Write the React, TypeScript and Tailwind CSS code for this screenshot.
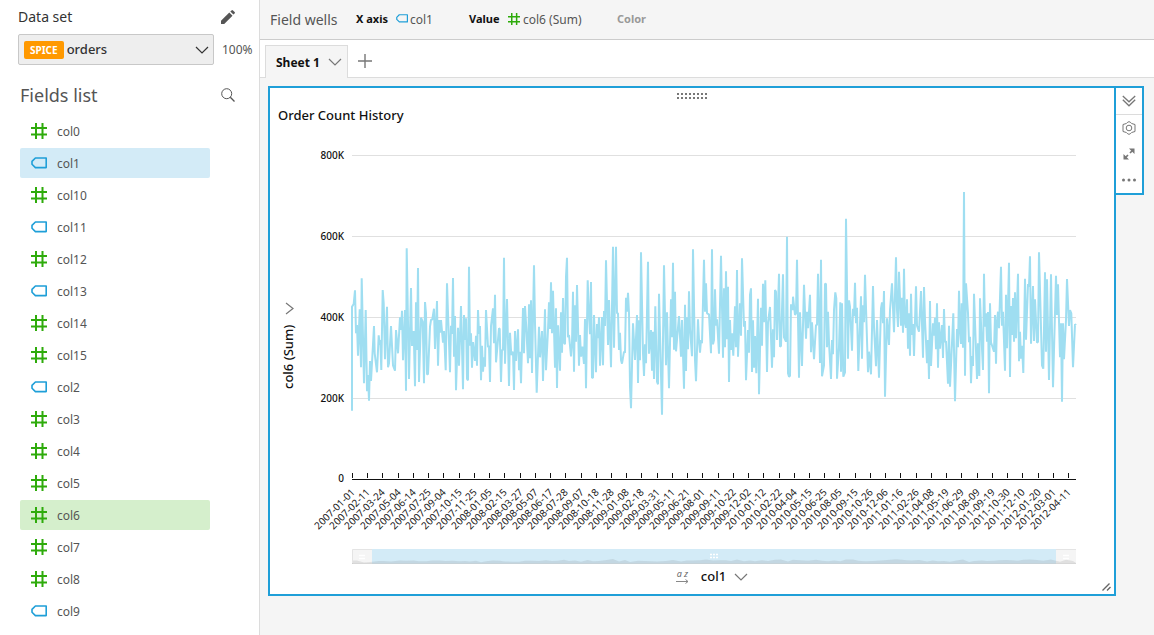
import React from "react";

type Kind = "number" | "text";
type Point = [number, number];

const FIELDS: { name: string; kind: Kind }[] = [
  { name: "col0", kind: "number" },
  { name: "col1", kind: "text" },
  { name: "col10", kind: "number" },
  { name: "col11", kind: "text" },
  { name: "col12", kind: "number" },
  { name: "col13", kind: "text" },
  { name: "col14", kind: "number" },
  { name: "col15", kind: "number" },
  { name: "col2", kind: "text" },
  { name: "col3", kind: "number" },
  { name: "col4", kind: "number" },
  { name: "col5", kind: "number" },
  { name: "col6", kind: "number" },
  { name: "col7", kind: "number" },
  { name: "col8", kind: "number" },
  { name: "col9", kind: "text" },
];

// The series is kept in four consecutive blocks, each with its own x origin.
// Points are "x,y" in thirds of a chart unit.
const BLOCKS: { origin: number; points: string }[] = [
  {
    origin: 345,
    points:
      "21,692 21,380 26,372 30,331 33,460 36,435 39,527 44,388 48,562 50,295 57,610 62,390 66,634 69,585 72,662 75,543 78,603 87,438 89,520 96,577 101,466 104,495 106,480 109,570 113,330 116,370 120,538 126,380 129,562 132,550 138,438 144,556 150,572 153,450 159,520 165,412 168,450 171,392 174,541 180,390 183,632 185,205 192,597 198,324 201,498 206,453 210,619 213,367 216,510 219,264 222,606 228,413 233,425 237,610 240,366 243,400 246,583 249,583 255,440 258,420 262,418 267,386 270,507 276,363 279,557 283,420 285,458 288,420 294,488 297,453 302,571 306,310 315,577 318,437 321,462 324,294 327,530 330,408 333,631 339,443 342,557 345,470 348,378 354,628 357,405 360,480 363,415 366,597 369,601 372,260 375,497 378,460 381,563 384,486 390,543 393,467 396,557 399,390 402,462 405,438 408,601 411,497 414,575 417,532 420,560 423,390 429,502 432,497 435,606 438,438 444,385 447,490 450,344 453,547 462,445 464,447 468,606 471,510 474,510 477,233 480,551 486,357 492,618 495,458 499,525 504,515 507,630 510,453 513,543 519,448 522,571 525,515 528,610 534,384 537,520 540,378 544,443 549,550 552,373 555,535 558,361 561,579",
  },
  {
    origin: 530,
    points:
      "12,256 15,430 20,638 27,440 30,532 36,453 39,603 45,388 48,571 54,450 57,367 60,447 63,307 66,460 69,332 75,563 78,385 81,624 84,436 90,572 93,397 96,518 99,354 102,488 105,493 108,290 111,233 114,472 117,465 123,529 126,490 129,335 132,575 135,376 138,485 141,315 147,557 150,465 153,530 157,500 162,552 165,417 168,625 173,301 176,390 180,463 183,306 186,593 189,593 192,405 198,577 201,432 204,475 207,412 210,557 216,411 219,556 222,393 225,438 228,241 234,495 237,360 243,562 249,200 252,503 258,200 261,400 264,400 267,510 270,458 273,540 276,551 282,515 285,518 288,353 291,395 294,338 297,400 300,620 303,685 309,430 315,540 321,405 324,609 327,421 330,541 333,217 339,520 342,588 345,493 348,550 354,245 357,521 363,450 366,572 369,455 372,597 376,379 381,605 384,613 387,341 396,704 402,256 408,556 411,397 417,625 423,358 426,472 429,248 432,509 435,335 438,514 447,408 453,530 456,420 462,626 465,374 468,573 471,412 474,508 477,334 480,446 486,529 489,208 495,540 498,604 504,418 507,480 510,518 513,480 516,490 522,239 525,395 528,310 531,400 537,403 543,520 546,208 549,493 552,480 555,328 558,437 561,418 567,521",
  },
  {
    origin: 715,
    points:
      "18,227 24,533 27,325 30,502 33,274 36,478 39,320 42,606 45,420 48,510 51,460 55,527 60,379 63,502 66,270 69,530 75,370 78,467 81,235 87,440 90,423 93,601 99,450 102,518 105,345 108,325 111,576 114,421 117,563 120,468 124,580 129,356 132,643 138,383 141,497 144,311 147,427 151,301 156,576 159,428 165,381 171,563 174,448 177,532 180,330 183,335 186,480 192,281 195,500 198,498 204,283 207,472 213,485 216,170 219,580 222,590 225,587 228,373 233,390 234,350 240,405 243,400 246,239 252,593 255,397 261,558 267,314 273,476 276,395 279,445 285,344 288,517 291,427 297,538 303,435 306,435 309,281 315,549 318,239 321,589 327,556 330,312 333,311 336,502 339,395 342,488 348,597 351,480 354,523 357,390 361,337 364,355 366,596 372,500 376,367 378,575 381,370 385,590 390,577 393,116 399,536 402,361 405,380 411,512 414,386 417,408 420,308 423,430 426,383 430,573 438,349 441,536 444,376 447,427 450,284 456,480 459,577 462,515 468,583 474,318 477,440 483,559 486,420 492,593 498,385 501,367 504,430 507,333 510,650 516,415 522,495 525,390 531,310 537,457 543,232 546,390 549,441 552,275 558,437 561,353 564,458",
  },
  {
    origin: 900,
    points:
      "12,266 15,430 18,443 21,358 24,506 27,400 30,527 33,341 36,465 39,432 42,528 48,319 51,437 57,455 63,333 69,533 72,321 75,420 81,550 84,480 87,597 90,363 93,558 99,430 102,467 105,413 108,508 111,370 114,563 117,427 120,506 126,435 129,534 132,387 135,487 138,483 144,611 147,437 150,620 156,490 160,400 165,664 171,447 174,502 177,332 180,450 183,492 185,370 189,503 192,36 195,587 198,310 204,400 207,487 210,470 213,610 216,528 219,558 222,341 231,597 234,490 238,588 240,355 246,506 249,570 252,281 255,440 258,400 261,485 264,396 267,640 270,370 273,487 282,515 285,405 288,551 291,425 294,395 297,445 303,260 306,437 309,395 315,572 318,344 321,505 327,248 330,591 333,378 336,465 339,354 342,485 345,337 348,475 354,281 357,544 360,455 363,536 366,497 370,579 375,296 378,479 384,312 387,320 390,229 393,491 399,318 402,483 405,358 411,488 414,485 417,217 420,330 426,556 430,566 435,277 438,515 441,298 447,600 453,283 459,622 468,287 471,405 474,313 480,532 483,430 486,665 489,430 492,538 498,420 501,297 507,438 510,390 514,400 519,562 525,433 528,436",
  },
];

const SERIES: Point[] = BLOCKS.flatMap(({ origin, points }) =>
  points.split(" ").map((pair): Point => {
    const [x, y] = pair.split(",").map(Number);
    return [origin + x / 3, 180 + y / 3];
  }),
);

const LINE = SERIES.map(([x, y]) => `${x.toFixed(1)},${y.toFixed(1)}`).join(" ");

// Overview strip: the same series smoothed over a short window.
const OVERVIEW =
  "352,563 " +
  SERIES.filter((_, i) => i % 5 === 0)
    .map(([x], i) => {
      const part = SERIES.slice(i * 5, i * 5 + 5);
      const mean = part.reduce((sum, p) => sum + p[1], 0) / part.length;
      return `${x.toFixed(1)},${(561 + (mean - 338) / 22).toFixed(1)}`;
    })
    .join(" ") +
  " 1076,563";

const TICKS = Array.from({ length: 48 }, (_, i) => ({
  x: Math.round(352 + i * 15.234) + 0.5,
  label: new Date(Date.UTC(2007, 0, 1 + i * 41)).toISOString().slice(0, 10),
}));

const Y_AXIS = [
  { label: "800K", y: 155.5 },
  { label: "600K", y: 236.5 },
  { label: "400K", y: 317.5 },
  { label: "200K", y: 398.5 },
];

function HashIcon({ className }: { className: string }) {
  return (
    <svg viewBox="0 0 16 16" className={className} fill="none" stroke="#2eab0b" strokeWidth="2" aria-hidden="true">
      <path d="M5 0v16M11.500 0v16M0 5h16M0 11.500h16" />
    </svg>
  );
}

function TagIcon({ className }: { className: string }) {
  return (
    <svg viewBox="0 0 16 12" className={className} fill="none" stroke="#1f9fd8" strokeWidth="1.6" aria-hidden="true">
      <path d="M4.400 1H15.200V10.600H4.400L1 7.200V4.400Z" strokeLinejoin="round" />
    </svg>
  );
}

function Chevron({ className }: { className: string }) {
  return (
    <svg viewBox="0 0 14 8" className={className} fill="none" stroke="currentColor" strokeWidth="1.2" aria-hidden="true">
      <path d="M1 1l6 6 6-6" />
    </svg>
  );
}

function Sidebar() {
  return (
    <aside className="w-[260px] shrink-0 border-r border-[#dcdcdc] bg-white">
      <div className="flex h-[34px] items-center justify-between pr-6 pl-[18px]">
        <h2 className="text-sm text-[#333]">Data set</h2>
        <button aria-label="Edit data set" className="text-[#555]">
          <svg viewBox="0 0 14 14" className="size-[14px]" fill="currentColor" aria-hidden="true">
            <path d="M0 14v-3.2L8.3 2.5l3.2 3.2L3.2 14zM9.3 1.6L10.5.4q.7-.7 1.5 0L13.6 2q.7.7 0 1.4l-1.2 1.2z" />
          </svg>
        </button>
      </div>
      <div className="flex items-center gap-2 pl-[18px]">
        <label className="flex h-[31px] w-[196px] items-center rounded-xs border border-[#c8c8c8] bg-[#eee] pr-1 pl-[5px] text-[#333]">
          <span className="rounded-xs bg-[#ff9900] px-[6px] text-[10px] leading-[18px] font-bold text-white">SPICE</span>
          <select aria-label="Data set" defaultValue="orders" className="min-w-0 flex-1 appearance-none bg-transparent pl-[3px] text-[13px] font-medium outline-none">
            <option>orders</option>
          </select>
          <Chevron className="h-2 w-[14px]" />
        </label>
        <span className="text-xs text-[#555]">100%</span>
      </div>
      <div className="flex h-[51px] items-center justify-between pt-2 pr-6 pl-5">
        <h2 className="text-lg text-[#555]">Fields list</h2>
        <button aria-label="Search fields" className="text-[#555]">
          <svg viewBox="0 0 14 14" className="size-[14px]" fill="none" stroke="currentColor" aria-hidden="true">
            <circle cx="5.7" cy="5.7" r="5" />
            <path d="M9.3 9.3l4.2 4.2" strokeWidth="1.3" />
          </svg>
        </button>
      </div>
      <ul className="flex flex-col gap-[2px] pr-[49px] pl-5">
        {FIELDS.map(({ name, kind }) => (
          <li key={name}>
            <button
              className={`flex h-[30px] w-full items-center gap-[10px] rounded-xs pl-[11px] text-xs text-[#555] ${
                name === "col1" ? "bg-[#d3ebf7]" : name === "col6" ? "bg-[#d5efcc]" : ""
              }`}
            >
              {kind === "number" ? <HashIcon className="size-4" /> : <TagIcon className="h-3 w-4" />}
              <span className="pt-[2px]">{name}</span>
            </button>
          </li>
        ))}
      </ul>
    </aside>
  );
}

function FieldWells() {
  return (
    <div className="flex h-10 items-center border-b border-[#ccc] pl-[10px] text-xs text-[#555]">
      <span className="w-[86px] text-sm whitespace-nowrap">Field wells</span>
      <div className="flex w-[113px] items-center">
        <strong className="w-10 text-[11px] whitespace-nowrap text-[#111]">X axis</strong>
        <TagIcon className="mb-[2px] h-[9px] w-3" />
        <span className="pl-[2px]">col1</span>
      </div>
      <div className="flex w-[148px] items-center">
        <strong className="w-[39px] text-[11px] text-[#111]">Value</strong>
        <HashIcon className="mb-[2px] size-3" />
        <span className="pl-[3px]">col6 (Sum)</span>
      </div>
      <strong className="text-[11px] text-[#999]">Color</strong>
    </div>
  );
}

function SheetTabs() {
  return (
    <div className="flex h-[38px] items-end border-b border-[#dcdcdc] bg-white pl-[5px]">
      <button className="-mb-px flex h-[33px] w-[83px] items-center justify-between border border-b-0 border-[#dcdcdc] bg-[#f5f5f5] pr-[5px] pl-[10px] text-xs font-bold text-[#111]">
        <span className="pt-[2px]">Sheet 1</span>
        <Chevron className="h-2 w-[14px] text-[#777]" />
      </button>
      <button aria-label="Add sheet" className="mb-[9px] ml-[10px] text-[#777]">
        <svg viewBox="0 0 14 14" className="size-[14px]" stroke="currentColor" strokeWidth="1.4" aria-hidden="true">
          <path d="M7 0v14M0 7h14" />
        </svg>
      </button>
    </div>
  );
}

function Chart() {
  return (
    <svg viewBox="270 128 844 438" className="block w-full" role="img" aria-label="Order Count History">
      <g stroke="#e0e0e0">
        {Y_AXIS.map(({ label, y }) => (
          <path key={label} d={`M352 ${y}H1076`} />
        ))}
      </g>
      <g fontSize="10" fontWeight="500" fill="#111" textAnchor="end">
        {Y_AXIS.map(({ label, y }) => (
          <text key={label} x="344" y={y + 3}>
            {label}
          </text>
        ))}
        <text x="344" y="482">
          0
        </text>
      </g>
      <path d="M286 303l7 5.500-7 5.500" fill="none" stroke="#777" strokeWidth="1.2" />
      <text transform="translate(293 389) rotate(-90)" fontSize="13" fontWeight="500" fill="#111">
        col6 (Sum)
      </text>
      <polyline points={LINE} fill="none" stroke="#9fdef1" strokeWidth="2" strokeLinejoin="bevel" />
      <path d="M352 479.500H1076" stroke="#111" />
      {TICKS.map(({ x, label }) => (
        <g key={label}>
          <path d={`M${x} 473v5`} stroke="#111" />
          <text transform={`translate(${x + 3} 493) rotate(-45)`} fontSize="10" fill="#222" textAnchor="end">
            {label}
          </text>
        </g>
      ))}
      <rect x="352" y="549" width="724" height="15" fill="#f5f5f5" />
      <rect x="372" y="549" width="684" height="15" fill="#d3ebf7" />
      <polygon points={OVERVIEW} fill="#666" opacity="0.14" />
      <path d="M352.500 564v-14.500H372M1076 549.500H1056" fill="none" stroke="#e4e4e4" />
      <path d="M352 563.500H1076" stroke="#bbb" opacity="0.5" />
      <path d="M359 555.500h6M359 558.500h6M1063 555.500h6M1063 558.500h6" stroke="#fff" strokeWidth="1.5" />
      <path d="M710 554.500h8M710 557.500h8" stroke="#fff" strokeWidth="1.500" strokeDasharray="2 1" />
    </svg>
  );
}

function Visual() {
  return (
    <section className="relative min-w-0 flex-1 border-2 border-[#1f9fd8] bg-white">
      <div className="flex h-4 items-center justify-center">
        <svg viewBox="0 0 30 6" className="h-[6px] w-[30px]" stroke="#777" strokeWidth="2" strokeDasharray="2 2" aria-hidden="true">
          <path d="M0 1h30M0 5h30" />
        </svg>
      </div>
      <h1 className="h-6 pl-2 text-[13px] leading-[22px] font-medium text-[#111]">Order Count History</h1>
      <Chart />
      <div className="flex h-7 items-start justify-center pl-10 text-[13px] font-medium text-[#111]">
        <button aria-label="Sort by col1" className="mt-[2px] mr-3 flex flex-col items-center">
          <span className="text-[9px] leading-3 font-normal text-[#666] italic">a z</span>
          <svg viewBox="0 0 13 5" className="-mt-px h-[5px] w-[13px]" fill="none" stroke="#888" aria-hidden="true">
            <path d="M0 2.500h12M9.500.5l2.500 2-2.500 2" />
          </svg>
        </button>
        <button className="flex items-center gap-2 pt-px">
          col1
          <Chevron className="h-2 w-[14px] text-[#777]" />
        </button>
      </div>
      <svg viewBox="0 0 9 9" className="absolute right-[3px] bottom-[3px] size-[9px]" fill="none" stroke="#666" strokeWidth="1.4" aria-hidden="true">
        <path d="M.5 8.500l7-7M5 8.500l3.500-3.500" />
      </svg>
    </section>
  );
}

function VisualTools() {
  return (
    <div className="-ml-[2px] flex h-[109px] w-[30px] shrink-0 flex-col items-center border-2 border-[#1f9fd8] bg-white text-[#777]">
      <button aria-label="Collapse" className="flex h-[27px] w-full items-center justify-center border-b border-[#dcdcdc]">
        <svg viewBox="0 0 14 12" className="h-3 w-[14px]" fill="none" stroke="currentColor" strokeWidth="1.300" aria-hidden="true">
          <path d="M.8 1L7 6.800 13.200 1M.8 4.800L7 10.800l6.200-6" />
        </svg>
      </button>
      <button aria-label="Format visual" className="flex h-[26px] items-center">
        <svg viewBox="0 0 14 14" className="size-[14px]" fill="none" stroke="currentColor" aria-hidden="true">
          <path d="M5.200 1.600L7 .6l1.800 1 .8.900 3.400 1v7l-3.400 1-.8.900-1.800 1-1.800-1-.8-.9-3.400-1v-7l3.400-1z" strokeLinejoin="round" />
          <circle cx="7" cy="7" r="2.800" />
        </svg>
      </button>
      <button aria-label="Maximize" className="flex h-[26px] items-center">
        <svg viewBox="0 0 12 12" className="size-3" fill="none" stroke="currentColor" strokeWidth="1.700" aria-hidden="true">
          <path d="M7 5l3-3M5 7l-3 3" />
          <path d="M6 .5h5.500v5.500zM.5 6v5.500h5.500z" fill="currentColor" stroke="none" />
        </svg>
      </button>
      <button aria-label="More options" className="flex h-[25px] items-center">
        <svg viewBox="0 0 14 4" className="h-1 w-[14px]" fill="currentColor" aria-hidden="true">
          <circle cx="1.500" cy="2" r="1.500" />
          <circle cx="7" cy="2" r="1.500" />
          <circle cx="12.500" cy="2" r="1.500" />
        </svg>
      </button>
    </div>
  );
}

export default function App() {
  return (
    <div className="flex min-h-screen bg-[#f5f5f5] font-['Noto_Sans','Open_Sans',sans-serif]">
      <Sidebar />
      <main className="min-w-0 flex-1">
        <FieldWells />
        <SheetTabs />
        <div className="flex items-start pt-2 pr-[10px] pb-8 pl-2">
          <Visual />
          <VisualTools />
        </div>
      </main>
    </div>
  );
}
